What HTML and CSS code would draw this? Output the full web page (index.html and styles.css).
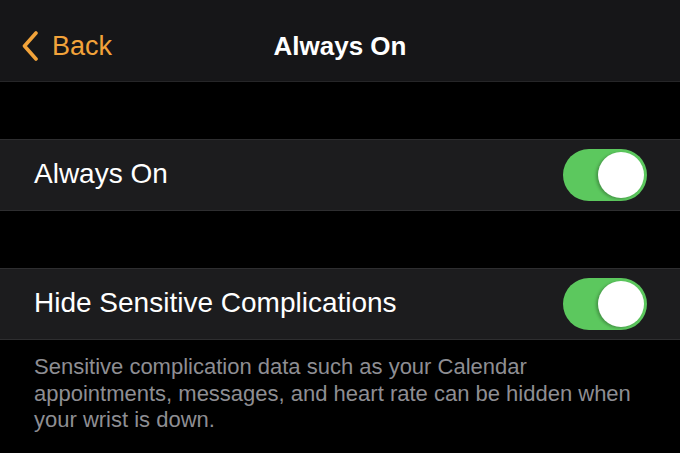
FILE: index.html
```html
<!DOCTYPE html>
<html lang="en">
<head>
    <meta charset="UTF-8" />
    <title>Always On</title>
    <link rel="stylesheet" href="styles.css">
</head>
<body>

    <div class="navbar">
        <a class="back" href="#">
            <svg class="chevron" width="20" height="30" viewBox="0 0 20 30">
                <path d="M16 2 L4.5 15 L16 28" fill="none" stroke="#f2a33a" stroke-width="3.6" stroke-linecap="round" stroke-linejoin="round" />
            </svg>
            <span>Back</span>
        </a>
        <div class="title">Always On</div>
        <div></div>
    </div>

    <div class="spacer"></div>

    <div class="row">
        <span class="label">Always On</span>
        <div class="toggle on"><div class="knob"></div></div>
    </div>

    <div class="spacer"></div>

    <div class="row">
        <span class="label">Hide Sensitive Complications</span>
        <div class="toggle on"><div class="knob"></div></div>
    </div>

    <p class="footnote">Sensitive complication data such as your Calendar appointments, messages, and heart rate can be hidden when your wrist is down.</p>

</body>
</html>
```

FILE: styles.css
```css
body {
    font-family: "Liberation Sans", Arial, sans-serif;
    background-color: #000000;
    color: #ffffff;
    margin: 0;
}

.navbar {
    height: 82px;
    box-sizing: border-box;
    padding: 31px 0 0 20px;
    background-color: #161618;
    border-bottom: 1px solid #262628;
    display: grid;
    grid-template-columns: 1fr auto 1fr;
    align-items: start;
}

.back {
    display: flex;
    align-items: center;
    gap: 12px;
    color: #f2a33a;
    text-decoration: none;
    font-size: 27px;
    line-height: 30px;
}

.title {
    font-size: 26px;
    font-weight: bold;
    line-height: 30px;
    margin-left: -20px;
}

.spacer {
    height: 57px;
}

.row {
    height: 72px;
    box-sizing: border-box;
    background-color: #1c1c1e;
    border-top: 1px solid #2e2e30;
    border-bottom: 1px solid #2e2e30;
    display: flex;
    align-items: center;
    justify-content: space-between;
    padding: 0 33px 0 34px;
}

.label {
    font-size: 28px;
    margin-top: -2px;
}

.toggle {
    width: 84px;
    height: 52px;
    border-radius: 26px;
    background-color: #3a3a3c;
    display: flex;
    align-items: center;
    padding: 0 3px;
    box-sizing: border-box;
}

.toggle.on {
    background-color: #5cc85e;
    justify-content: flex-end;
}

.knob {
    width: 46px;
    height: 46px;
    border-radius: 50%;
    background-color: #ffffff;
    box-shadow: -2px 1px 3px rgba(0, 0, 0, 0.25);
}

.footnote {
    margin: 0;
    padding: 14px 34px 0;
    font-size: 22px;
    line-height: 26.5px;
    color: #8e8e93;
}
```
